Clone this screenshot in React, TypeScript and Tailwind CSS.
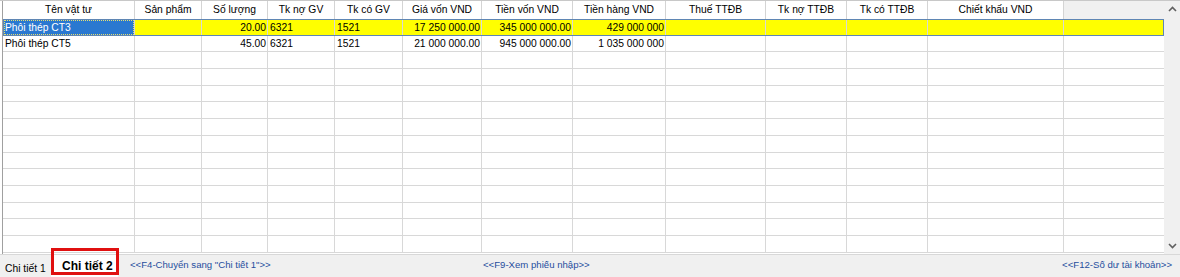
import React from "react";

const cols = [132, 67, 66, 67, 68, 79, 91, 93, 100, 81, 81, 136, 100];
const headers = [
  "Tên vật tư",
  "Sản phẩm",
  "Số lượng",
  "Tk nợ GV",
  "Tk có GV",
  "Giá vốn VND",
  "Tiền vốn VND",
  "Tiền hàng VND",
  "Thuế TTĐB",
  "Tk nợ TTĐB",
  "Tk có TTĐB",
  "Chiết khấu VND",
  "",
];

type Cell = { t: string; a: "l" | "r" };
const rows: Cell[][] = [
  [
    { t: "Phôi thép CT3", a: "l" },
    { t: "", a: "l" },
    { t: "20.00", a: "r" },
    { t: "6321", a: "l" },
    { t: "1521", a: "l" },
    { t: "17 250 000.00", a: "r" },
    { t: "345 000 000.00", a: "r" },
    { t: "429 000 000", a: "r" },
  ],
  [
    { t: "Phôi thép CT5", a: "l" },
    { t: "", a: "l" },
    { t: "45.00", a: "r" },
    { t: "6321", a: "l" },
    { t: "1521", a: "l" },
    { t: "21 000 000.00", a: "r" },
    { t: "945 000 000.00", a: "r" },
    { t: "1 035 000 000", a: "r" },
  ],
];

const gridCols =
  "grid grid-cols-[132px_67px_66px_67px_68px_79px_91px_93px_100px_81px_81px_136px_100px]";

export default function App() {
  const emptyCount = 12;
  return (
    <div
      className="w-[1180px] h-[277px] bg-white overflow-hidden relative text-[10.3px] text-black"
      style={{ fontFamily: '"Liberation Sans", Arial, sans-serif' }}
    >
      <div className="flex h-[254px] border-t border-[#c8c8c8]">
        <div className="w-[1164px] pl-[2px] flex flex-col overflow-hidden">
          <div className="border-l border-[#a0a0a0] flex flex-col h-full">
            {/* header */}
            <div className={`${gridCols} h-[18px] shrink-0`}>
              {headers.map((h, i) => (
                <div
                  key={i}
                  className={`flex items-center justify-center pt-[1px] border-r border-[#d4d4d4] leading-none whitespace-nowrap ${
                    i === headers.length - 1 ? "bg-[#f0f0f0] border-r-0" : "bg-white"
                  }`}
                >
                  {h}
                </div>
              ))}
            </div>
            {/* rows */}
            {rows.map((r, ri) => {
              const sel = ri === 0;
              return (
                <div
                  key={ri}
                  className={`${gridCols} h-[16.7px] shrink-0 ${
                    sel
                      ? "bg-[#ffff00] outline outline-1 outline-[#5f86b4] -outline-offset-1 relative z-10"
                      : "bg-white border-b border-[#d8d8d8]"
                  }`}
                >
                  {cols.map((_, ci) => {
                    const c = r[ci];
                    const isSelCell = sel && ci === 0;
                    return (
                      <div
                        key={ci}
                        className={`flex items-center pt-[1px] leading-none whitespace-nowrap overflow-hidden ${
                          c && c.a === "r" ? "justify-end pr-[1px]" : "justify-start pl-[2px]"
                        } ${ci === cols.length - 1 ? "" : "border-r border-[#d8d8d8]"} ${
                          isSelCell
                            ? "bg-[#2a78d0] text-white outline outline-1 outline-dotted outline-[#e8e070] -outline-offset-2"
                            : ""
                        }`}
                      >
                        {c ? c.t : ""}
                      </div>
                    );
                  })}
                </div>
              );
            })}
            {Array.from({ length: emptyCount }).map((_, ri) => (
              <div
                key={"e" + ri}
                className={`${gridCols} h-[16.7px] shrink-0 bg-white border-b border-[#d8d8d8]`}
              >
                {cols.map((_, ci) => (
                  <div
                    key={ci}
                    className={ci === cols.length - 1 ? "" : "border-r border-[#d8d8d8]"}
                  />
                ))}
              </div>
            ))}
          </div>
        </div>
        {/* scrollbar */}
        <div className="w-[16px] bg-[#f0f0f0] flex flex-col justify-between items-center py-[5px]">
          <svg width="9" height="6" viewBox="0 0 9 6">
            <path d="M1 5 L4.5 1.5 L8 5" stroke="#606060" strokeWidth="1.6" fill="none" />
          </svg>
          <svg width="9" height="6" viewBox="0 0 9 6">
            <path d="M1 1 L4.5 4.5 L8 1" stroke="#606060" strokeWidth="1.6" fill="none" />
          </svg>
        </div>
      </div>
      {/* tab strip */}
      <div className="h-[23px] bg-[#f0f0f0] border-t border-[#d8d8d8] flex items-stretch relative whitespace-nowrap">
        <div className="w-[51px] pl-[5px] pt-[6px] text-[10.3px]">Chi tiết 1</div>
        <div className="w-[67px] pl-[11px] text-[12px] font-bold pt-[2px] bg-white">Chi tiết 2</div>
        <div className="ml-[12px] w-[353px] pt-[3px] text-[9.6px] text-[#1f4e9e]">{'<<F4-Chuyển sang "Chi tiết 1">>'}</div>
        <div className="pt-[3px] text-[9.6px] text-[#1f4e9e]">{"<<F9-Xem phiếu nhập>>"}</div>
        <div className="ml-auto mr-[8px] pt-[3px] text-[9.6px] text-[#1f4e9e]">{"<<F12-Số dư tài khoản>>"}</div>
      </div>
      {/* annotation box */}
      <div className="absolute left-[51px] top-[248px] w-[68px] h-[27px] border-[3px] border-[#e01010] pointer-events-none" />
    </div>
  );
}
